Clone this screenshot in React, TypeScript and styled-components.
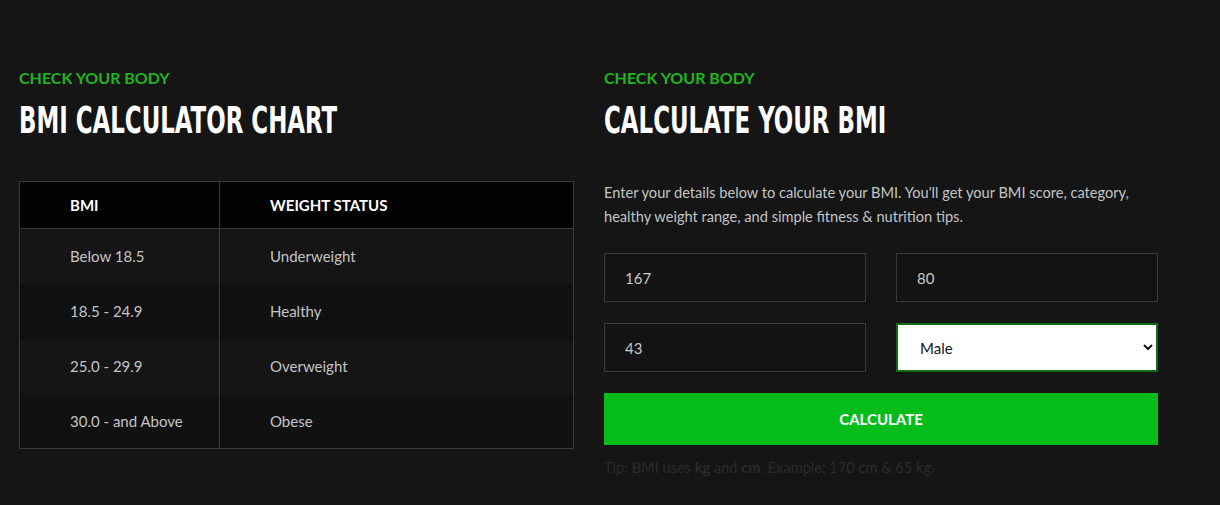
import React, { ReactElement } from "react";
import styled, { createGlobalStyle } from "styled-components";

const GlobalStyle = createGlobalStyle`
  * {
    box-sizing: border-box;
  }

  body {
    margin: 0;
    background-color: #151515;
    font-family: Lato, "Noto Sans", sans-serif;
  }
`;

const rows = [
  { bmi: "Below 18.5", status: "Underweight" },
  { bmi: "18.5 - 24.9", status: "Healthy" },
  { bmi: "25.0 - 29.9", status: "Overweight" },
  { bmi: "30.0 - and Above", status: "Obese" },
];

function App(): ReactElement {
  return (
    <>
      <GlobalStyle />
      <Section>
        <Column>
          <Kicker>CHECK YOUR BODY</Kicker>
          <Title>BMI CALCULATOR CHART</Title>
          <Chart>
            <thead>
              <tr>
                <HeadCell>BMI</HeadCell>
                <HeadCell>WEIGHT STATUS</HeadCell>
              </tr>
            </thead>
            <tbody>
              {rows.map((row, i) => (
                <BodyRow key={row.bmi} $dark={i % 2 === 1}>
                  <BodyCell>{row.bmi}</BodyCell>
                  <BodyCell>{row.status}</BodyCell>
                </BodyRow>
              ))}
            </tbody>
          </Chart>
        </Column>

        <Column>
          <Kicker>CHECK YOUR BODY</Kicker>
          <Title>CALCULATE YOUR BMI</Title>
          <Intro>
            Enter your details below to calculate your BMI. You'll get your BMI
            score, category, healthy weight range, and simple fitness &amp;
            nutrition tips.
          </Intro>
          <Form onSubmit={(e) => e.preventDefault()}>
            <Field type="text" defaultValue="167" placeholder="Height / cm" />
            <Field type="text" defaultValue="80" placeholder="Weight / kg" />
            <Field type="text" defaultValue="43" placeholder="Age" />
            <Select defaultValue="male">
              <option value="male">Male</option>
              <option value="female">Female</option>
            </Select>
            <SubmitButton type="submit">CALCULATE</SubmitButton>
          </Form>
          <Tip>
            Tip: BMI uses <b>kg</b> and <b>cm</b>. Example: 170 cm &amp; 65 kg.
          </Tip>
        </Column>
      </Section>
    </>
  );
}

const Section = styled.section`
  display: grid;
  grid-template-columns: 555px 555px;
  column-gap: 30px;
  padding: 67px 0 40px 19px;
`;

const Column = styled.div`
  display: flex;
  flex-direction: column;
`;

const Kicker = styled.p`
  margin: 0;
  color: #1fb51f;
  font-size: 16px;
  font-weight: 700;
  line-height: 22px;
`;

const Title = styled.h2`
  margin: 8px 0 0;
  color: #ffffff;
  font-family: "DejaVu Sans Condensed", "DejaVu Sans", sans-serif;
  font-size: 38px;
  font-weight: 700;
  line-height: 46px;
  white-space: nowrap;
  transform: scaleX(0.67);
  transform-origin: left center;
`;

const Chart = styled.table`
  width: 100%;
  margin-top: 38px;
  border-collapse: collapse;
  border: 1px solid #3a3a3a;
  font-size: 15px;
`;

const HeadCell = styled.th`
  height: 47px;
  padding: 0 0 0 50px;
  border: 1px solid #3a3a3a;
  background-color: #030303;
  color: #ffffff;
  font-weight: 700;
  text-align: left;

  &:first-child {
    width: 200px;
  }
`;

const BodyRow = styled.tr<{ $dark: boolean }>`
  background-color: ${(props) => (props.$dark ? "#111111" : "#151515")};
`;

const BodyCell = styled.td`
  height: 55px;
  padding: 0 0 0 50px;
  border-left: 1px solid #3a3a3a;
  color: #c4c4c4;
`;

const Intro = styled.p`
  margin: 38px 0 0;
  color: #c4c4c4;
  font-size: 14.6px;
  line-height: 24px;
`;

const Form = styled.form`
  display: grid;
  grid-template-columns: 262px 262px;
  column-gap: 30px;
  row-gap: 21px;
  margin-top: 24px;
`;

const Field = styled.input`
  height: 49px;
  padding: 0 20px;
  border: 1px solid #3a3a3a;
  background-color: #131313;
  color: #c8c8c8;
  font-family: inherit;
  font-size: 15px;
  outline: none;
`;

const Select = styled.select`
  height: 49px;
  padding: 0 4px 0 18px;
  border: 2px solid #0d6b12;
  border-radius: 0;
  background-color: #ffffff;
  color: #151515;
  font-family: inherit;
  font-size: 15px;
  outline: none;
`;

const SubmitButton = styled.button`
  grid-column: 1 / -1;
  height: 52px;
  border: none;
  background-color: #04bd1a;
  color: #ffffff;
  font-family: inherit;
  font-size: 15px;
  font-weight: 700;
  cursor: pointer;
`;

const Tip = styled.p`
  margin: 13px 0 0;
  color: #2b2b2b;
  font-size: 14.6px;
  line-height: 20px;

  b {
    font-weight: 700;
  }
`;

export default App;
